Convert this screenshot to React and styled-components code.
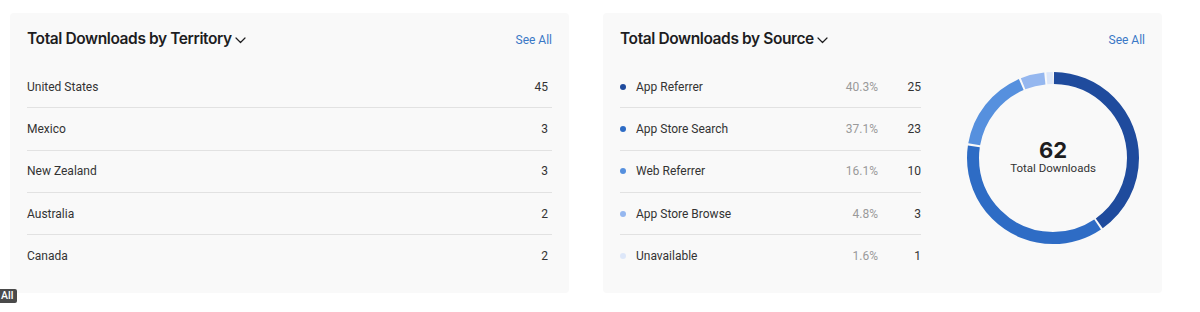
import styled, { createGlobalStyle } from "styled-components";

const GlobalStyle = createGlobalStyle`
  body {
    margin: 0;
    background: #ffffff;
    font-family: Roboto, "Liberation Sans", Arial, sans-serif;
    color: #333333;
  }
`;

const Page = styled.div`
  position: relative;
  display: flex;
  gap: 34px;
  padding: 13px 38px 0 10px;
  height: 312px;
  box-sizing: border-box;
`;

const Card = styled.section`
  width: 559px;
  height: 280px;
  box-sizing: border-box;
  padding: 15px 17px 0 17px;
  background: #f9f9f9;
  border-radius: 4px;
`;

const Header = styled.div`
  display: flex;
  justify-content: space-between;
  align-items: baseline;
  margin-bottom: 16px;
  height: 22px;
`;

const Title = styled.h2`
  margin: 0;
  display: flex;
  align-items: center;
  gap: 3px;
  font-family: Inter, "Liberation Sans", Arial, sans-serif;
  font-size: 15.5px;
  line-height: 22px;
  font-weight: 600;
  color: #1d1d1f;
  letter-spacing: -0.4px;

  svg {
    margin-top: 2px;
  }
`;

const SeeAll = styled.a`
  font-size: 12px;
  color: #3a78c6;
  text-decoration: none;
  cursor: pointer;
`;

const Body = styled.div`
  display: flex;
  align-items: flex-start;
`;

const List = styled.div`
  display: flex;
  flex-direction: column;
  width: ${(p) => p.$width || "auto"};
  flex: ${(p) => (p.$width ? "none" : "1")};
`;

const Row = styled.div`
  display: flex;
  align-items: center;
  height: 42.3px;
  box-sizing: border-box;
  border-bottom: 1px solid #e2e2e2;
  font-size: 12px;
  color: #333333;

  &:last-child {
    border-bottom: none;
  }
`;

const Label = styled.span`
  flex: 1;
  display: flex;
  align-items: center;
  gap: 10px;
`;

const Dot = styled.span`
  width: 6px;
  height: 6px;
  border-radius: 50%;
  background: ${(p) => p.$color};
`;

const Percent = styled.span`
  color: #9a9a9a;
  text-align: right;
`;

const Count = styled.span`
  width: ${(p) => p.$width || "auto"};
  text-align: right;
  padding-right: ${(p) => p.$pad || "0"};
`;

const Donut = styled.div`
  display: grid;
  margin: 6px 0 0 46px;
  width: 172px;
  height: 172px;

  & > * {
    grid-area: 1 / 1;
  }
`;

const Center = styled.div`
  display: flex;
  flex-direction: column;
  align-items: center;
  justify-content: center;
  padding-bottom: 2px;
`;

const Big = styled.div`
  font-family: Inter, "Liberation Sans", Arial, sans-serif;
  font-size: 22px;
  line-height: 22px;
  font-weight: 700;
  color: #1d1d1f;
`;

const Small = styled.div`
  font-size: 11.5px;
  line-height: 15px;
  color: #333333;
`;

const Tip = styled.div`
  position: absolute;
  left: 0;
  top: 289px;
  height: 14px;
  padding: 0 4px 0 1px;
  background: #4a4a4a;
  color: #ffffff;
  font-size: 10.5px;
  font-weight: 500;
  line-height: 14px;
  border-radius: 0 2px 2px 0;
`;

const Chevron = () => (
  <svg width="11" height="7" viewBox="0 0 11 7" fill="none">
    <path d="M1 1l4.5 4.5L10 1" stroke="#1d1d1f" strokeWidth="1.2" strokeLinecap="round" strokeLinejoin="round" />
  </svg>
);

const territories = [
  ["United States", 45],
  ["Mexico", 3],
  ["New Zealand", 3],
  ["Australia", 2],
  ["Canada", 2],
];

const sources = [
  ["App Referrer", "40.3%", 25, "#1f4b9d"],
  ["App Store Search", "37.1%", 23, "#2e6cc5"],
  ["Web Referrer", "16.1%", 10, "#5690de"],
  ["App Store Browse", "4.8%", 3, "#95b7ef"],
  ["Unavailable", "1.6%", 1, "#dde7f9"],
];

const Ring = () => {
  const r = 80;
  const c = 2 * Math.PI * r;
  const total = sources.reduce((s, x) => s + x[2], 0);
  let offset = 0;
  return (
    <svg width="172" height="172" viewBox="0 0 172 172">
      <g transform="rotate(-90 86 86)">
        {sources.map(([name, , n, color]) => {
          const len = (n / total) * c;
          const seg = (
            <circle
              key={name}
              cx="86"
              cy="86"
              r={r}
              fill="none"
              stroke={color}
              strokeWidth="12"
              strokeDasharray={`${len - 2} ${c - len + 2}`}
              strokeDashoffset={-offset - 1}
            />
          );
          offset += len;
          return seg;
        })}
      </g>
    </svg>
  );
};

const App = () => {
  return (
    <>
      <GlobalStyle />
      <Page>
        <Card>
          <Header>
            <Title>
              Total Downloads by Territory <Chevron />
            </Title>
            <SeeAll>See All</SeeAll>
          </Header>
          <List>
            {territories.map(([name, n]) => (
              <Row key={name}>
                <Label>{name}</Label>
                <Count $pad="4px">{n}</Count>
              </Row>
            ))}
          </List>
        </Card>
        <Card>
          <Header>
            <Title>
              Total Downloads by Source <Chevron />
            </Title>
            <SeeAll>See All</SeeAll>
          </Header>
          <Body>
            <List $width="301px">
              {sources.map(([name, pct, n, color]) => (
                <Row key={name}>
                  <Label>
                    <Dot $color={color} />
                    {name}
                  </Label>
                  <Percent>{pct}</Percent>
                  <Count $width="43px">{n}</Count>
                </Row>
              ))}
            </List>
            <Donut>
              <Ring />
              <Center>
                <Big>62</Big>
                <Small>Total Downloads</Small>
              </Center>
            </Donut>
          </Body>
        </Card>
        <Tip>All</Tip>
      </Page>
    </>
  );
};

export default App;
